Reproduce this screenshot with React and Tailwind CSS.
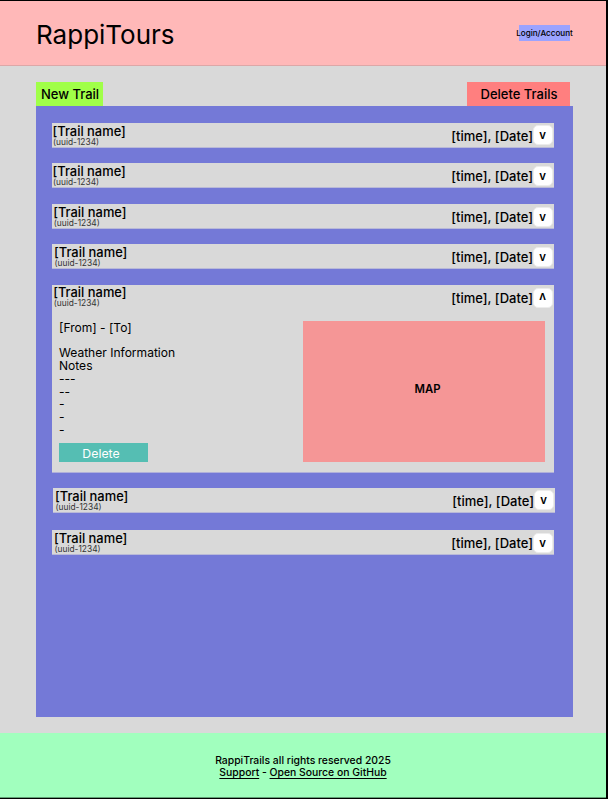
import React from "react";

const closedTop = [
  { id: 1, row: "mt-[17px]", pad: "pl-[0.5px]", name: "pt-px", button: "mt-[2px]" },
  { id: 2, row: "mt-[15px]", pad: "pl-[0.5px]", name: "pt-px", button: "mt-[3px]" },
  { id: 3, row: "mt-4", pad: "pl-[1.2px]", name: "pt-px", button: "mt-[3px]" },
  { id: 4, row: "mt-[15px]", pad: "pl-[2px]", name: "pt-px", button: "mt-[3px]" },
];

const closedBottom = [
  { id: 6, row: "mt-[15px] ml-px -mr-px", pad: "pl-[2px]", name: "pt-px", button: "mt-[2px]" },
  { id: 7, row: "mt-[17px]", pad: "pl-[2px]", name: "pt-px", button: "mt-[3px]" },
];

function RowHeader({ pad, name, button, open }) {
  return (
    <div className={`flex h-6 items-start justify-between ${pad}`}>
      <div className={name}>
        <div className="h-4 text-[12.9px] leading-4 font-medium">[Trail name]</div>
        <div className="-mt-[2px] h-2 pl-[0.5px] text-[8.4px] leading-2 text-[#333]">(uuid-1234)</div>
      </div>
      <div className="flex items-start pr-px">
        <span className="mt-[3px] text-[13px] leading-5 font-medium">[time], [Date]</span>
        <button
          className={`flex h-5 w-5 items-center justify-center rounded-[5px] border border-[#ececec] bg-white pr-px text-[11.4px] leading-none font-semibold ${open ? "pb-[2px]" : "pt-[2px]"} ${button}`}
        >
          {open ? "ʌ" : "v"}
        </button>
      </div>
    </div>
  );
}

function ClosedRow({ row, ...header }) {
  return (
    <div className={`h-[25px] border-b border-[#b9b9d8] bg-[#d9d9d9] ${row}`}>
      <RowHeader {...header} />
    </div>
  );
}

export default function App() {
  return (
    <div className="flex h-[799px] w-[608px] flex-col overflow-hidden border-t border-r-2 border-b border-black bg-[#d9d9d9] font-['Inter',sans-serif] whitespace-nowrap text-black">
      <header className="flex h-[65px] shrink-0 items-start justify-between border-b border-[#dca7a7] bg-[#ffb8b8] pr-[36px] pl-[36px]">
        <h1 className="mt-[18px] text-[26px] leading-8">RappiTours</h1>
        <a className="mt-6 flex h-4 w-[51px] justify-center bg-[#9ba3ff] text-[8.1px] leading-[17px] font-medium">
          <span>Login/Account</span>
        </a>
      </header>

      <main className="h-[667px] shrink-0 pt-4 pr-[33px] pl-9">
        <div className="flex h-6 justify-between pr-[3px]">
          <button className="w-[67px] bg-[#a0ff48] pl-px text-[13px] leading-6 font-medium">New Trail</button>
          <button className="w-[103px] bg-[#ff7f7f] pl-px text-[13px] leading-6 font-medium">Delete Trails</button>
        </div>
        <section className="flex h-[611px] flex-col bg-[#7479d7] pr-[19px] pl-4">
          {closedTop.map((r) => (
            <ClosedRow key={r.id} {...r} />
          ))}

          <div className="mt-4 h-[188px] border-b border-[#b0b0da] bg-[#d9d9d9]">
            <RowHeader pad="pl-[1.2px]" name="pt-0" button="mt-[3px]" open />
            <div className="flex justify-between pt-3 pr-[9px] pl-[7px]">
              <div className="text-[12.05px] leading-[12.8px]">
                <p className="pt-px">[From] - [To]</p>
                <p className="mt-[12.35px]">Weather Information</p>
                <p>Notes</p>
                <p>---</p>
                <p>--</p>
                <p>-</p>
                <p>-</p>
                <p>-</p>
                <button className="mt-[6.4px] block h-[19px] w-[89px] bg-[#55beb3] pr-[5px] text-[12.3px] leading-[21px] text-white">
                  Delete
                </button>
              </div>
              <div className="flex h-[141px] w-[242px] items-center justify-center bg-[#f59696] pb-[5px] pl-[7px] text-[11.3px] font-semibold">
                MAP
              </div>
            </div>
          </div>

          {closedBottom.map((r) => (
            <ClosedRow key={r.id} {...r} />
          ))}
        </section>
      </main>

      <footer className="flex-1 border-b border-[#60a075] bg-[#a1ffbe] pt-[21px] text-center text-[10.4px] leading-[13px] font-medium">
        <p>RappiTrails all rights reserved 2025</p>
        <p className="-mt-px">
          <a className="underline underline-offset-2">Support</a> -{" "}
          <a className="underline underline-offset-2">Open Source on GitHub</a>
        </p>
      </footer>
    </div>
  );
}
